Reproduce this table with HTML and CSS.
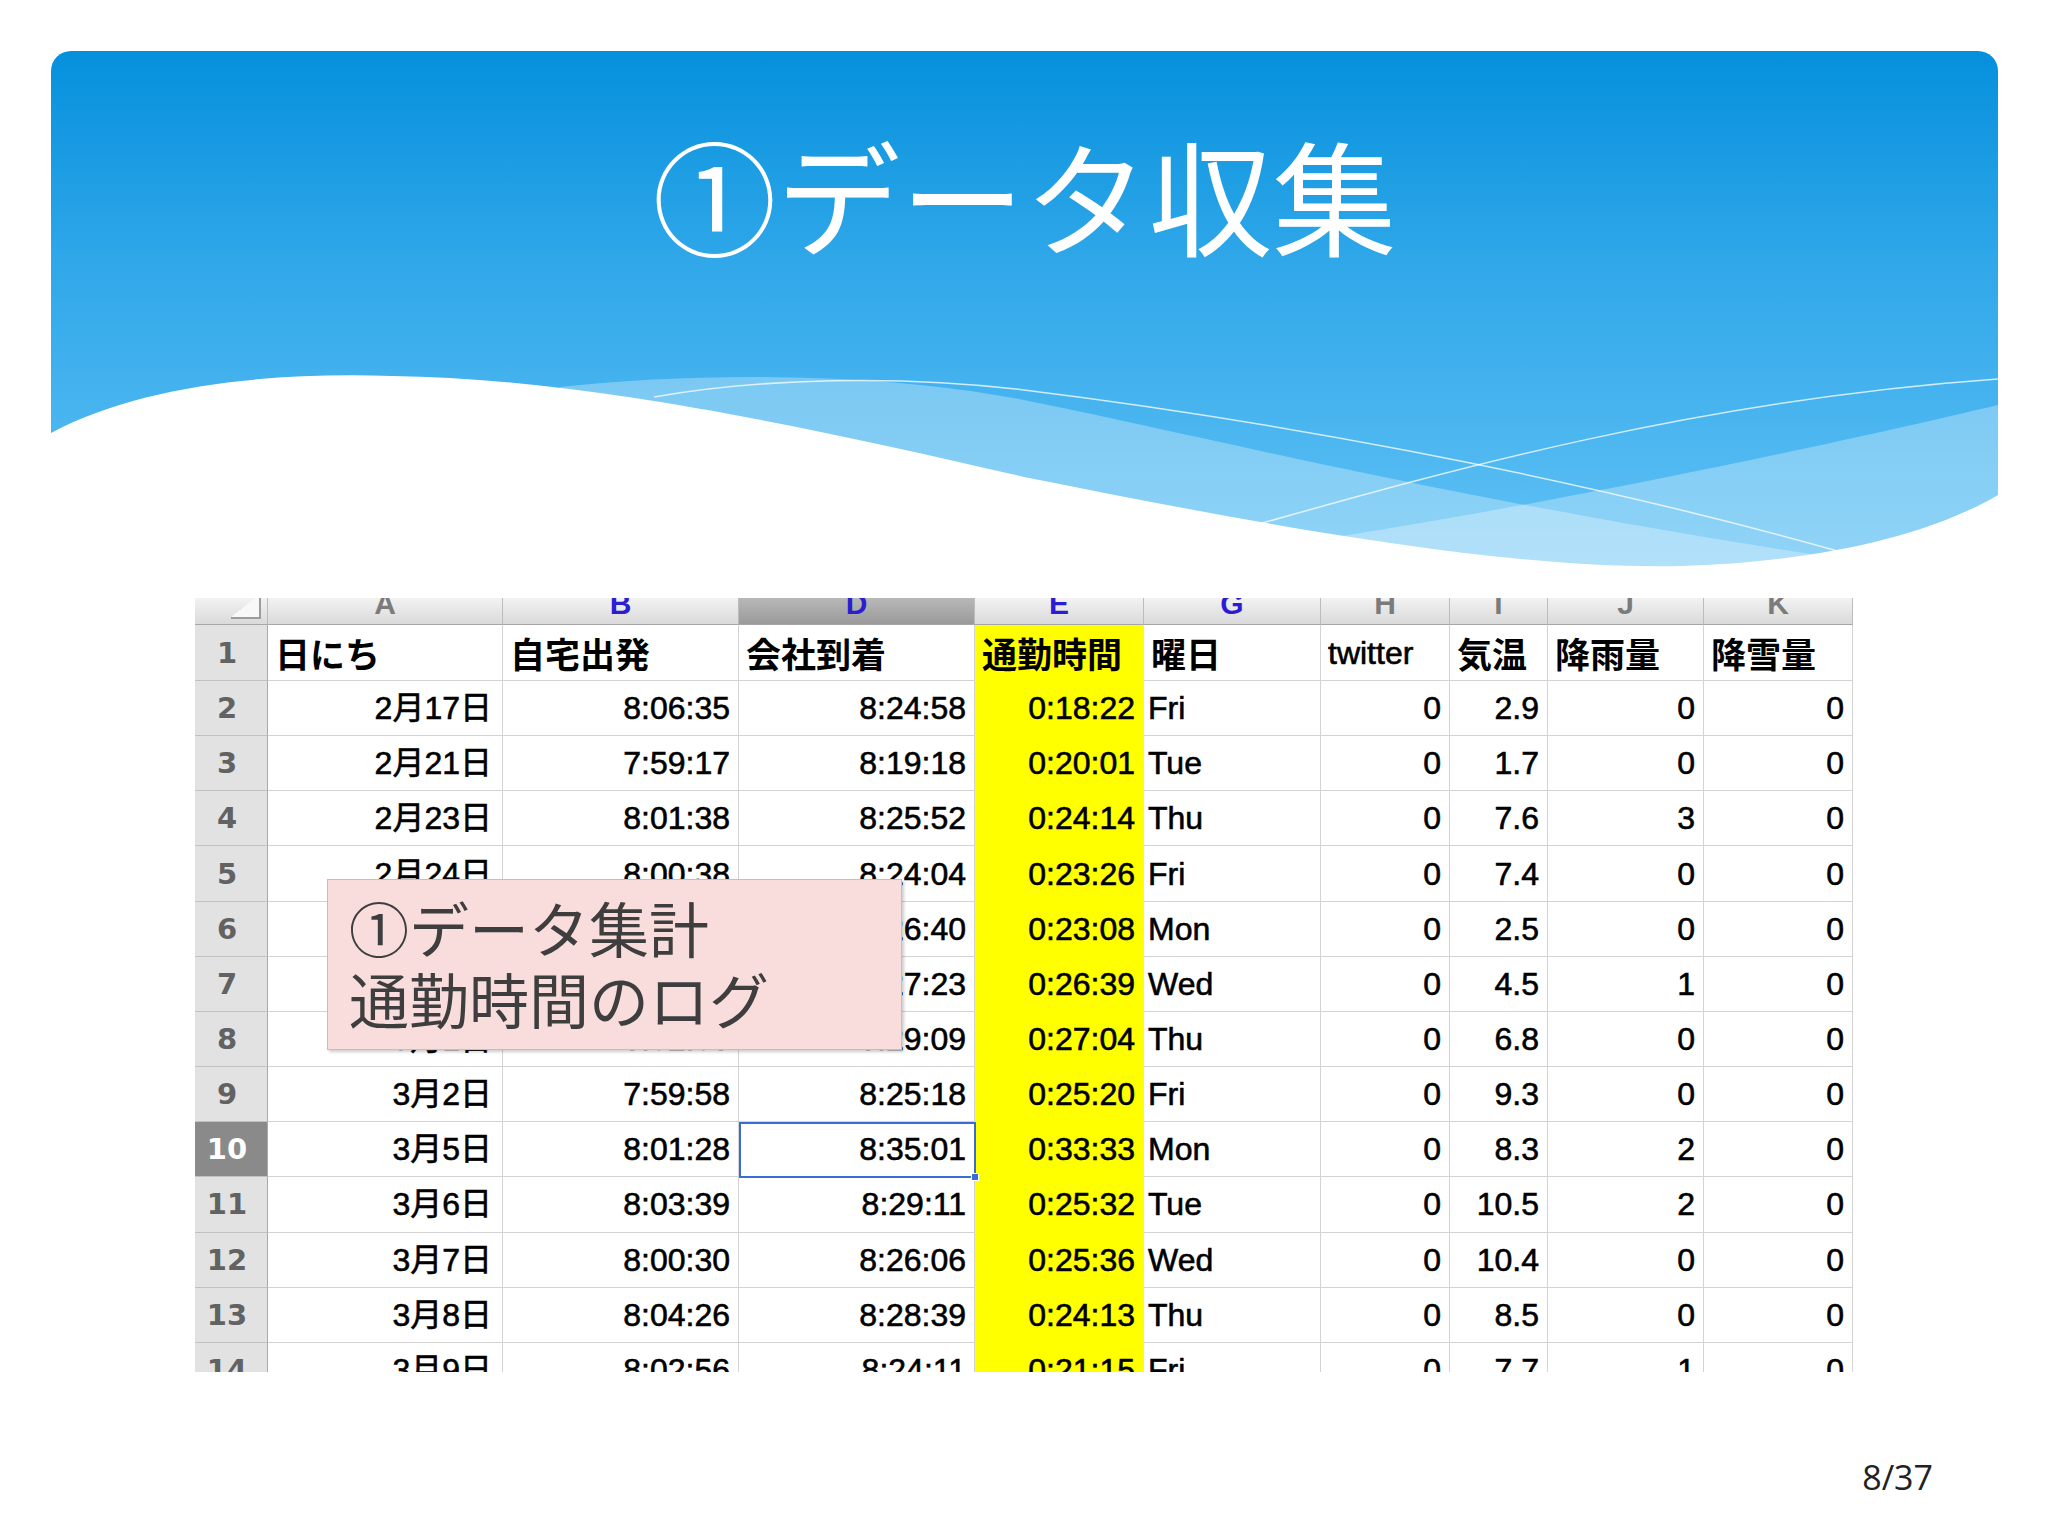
FILE: index.html
```html
<!DOCTYPE html>
<html lang="ja">
<head>
<meta charset="utf-8">
<title>①データ収集</title>
<link rel="stylesheet" href="styles.css">
</head>
<body>
<header class="banner">
  <h1 class="title">①データ収集</h1>
  <svg class="wave" viewBox="51 51 1947 520" preserveAspectRatio="none" aria-hidden="true">
    <path fill="#fff" fill-opacity="0.3" d="M560,387 C700,372 880,372 1024,400 C1200,435 1450,500 1850,560 L1850,600 L560,600 Z"/>
    <path fill="#fff" fill-opacity="0.3" d="M1998,405 C1850,440 1600,495 1330,538 L1330,600 L1998,600 Z"/>
    <path fill="none" stroke="#fff" stroke-opacity="0.75" stroke-width="1.5" d="M654,397 C760,378 900,375 1024,390 C1250,418 1550,470 1841,552"/>
    <path fill="none" stroke="#fff" stroke-opacity="0.75" stroke-width="1.5" d="M1259,524 C1450,470 1700,400 1998,379"/>
    <path fill="#fff" d="M51,433 C140,385 270,372 392,376 C560,378 760,415 1024,477 C1250,522 1500,570 1680,566 C1820,562 1930,535 1998,495 L1998,590 L51,590 Z"/>
  </svg>
</header>

<main class="sheet">
  <div class="ch corner"><span class="tri"></span></div>
  <div class="ch">A</div>
  <div class="ch blue">B</div>
  <div class="ch blue dark">D</div>
  <div class="ch blue">E</div>
  <div class="ch blue">G</div>
  <div class="ch">H</div>
  <div class="ch">I</div>
  <div class="ch">J</div>
  <div class="ch">K</div>

  <div class="rh">1</div>
  <div class="c l hd">日にち</div>
  <div class="c l hd">自宅出発</div>
  <div class="c l hd">会社到着</div>
  <div class="c l hd y">通勤時間</div>
  <div class="c l hd">曜日</div>
  <div class="c l">twitter</div>
  <div class="c l hd">気温</div>
  <div class="c l hd">降雨量</div>
  <div class="c l hd">降雪量</div>

  <div class="rh">2</div>
  <div class="c a">2月17日</div><div class="c">8:06:35</div><div class="c">8:24:58</div><div class="c y">0:18:22</div><div class="c l g">Fri</div><div class="c">0</div><div class="c">2.9</div><div class="c">0</div><div class="c">0</div>

  <div class="rh">3</div>
  <div class="c a">2月21日</div><div class="c">7:59:17</div><div class="c">8:19:18</div><div class="c y">0:20:01</div><div class="c l g">Tue</div><div class="c">0</div><div class="c">1.7</div><div class="c">0</div><div class="c">0</div>

  <div class="rh">4</div>
  <div class="c a">2月23日</div><div class="c">8:01:38</div><div class="c">8:25:52</div><div class="c y">0:24:14</div><div class="c l g">Thu</div><div class="c">0</div><div class="c">7.6</div><div class="c">3</div><div class="c">0</div>

  <div class="rh">5</div>
  <div class="c a">2月24日</div><div class="c">8:00:38</div><div class="c">8:24:04</div><div class="c y">0:23:26</div><div class="c l g">Fri</div><div class="c">0</div><div class="c">7.4</div><div class="c">0</div><div class="c">0</div>

  <div class="rh">6</div>
  <div class="c a">2月27日</div><div class="c">8:03:32</div><div class="c">8:26:40</div><div class="c y">0:23:08</div><div class="c l g">Mon</div><div class="c">0</div><div class="c">2.5</div><div class="c">0</div><div class="c">0</div>

  <div class="rh">7</div>
  <div class="c a">2月29日</div><div class="c">8:00:44</div><div class="c">8:27:23</div><div class="c y">0:26:39</div><div class="c l g">Wed</div><div class="c">0</div><div class="c">4.5</div><div class="c">1</div><div class="c">0</div>

  <div class="rh">8</div>
  <div class="c a">3月1日</div><div class="c">8:02:05</div><div class="c">8:29:09</div><div class="c y">0:27:04</div><div class="c l g">Thu</div><div class="c">0</div><div class="c">6.8</div><div class="c">0</div><div class="c">0</div>

  <div class="rh">9</div>
  <div class="c a">3月2日</div><div class="c">7:59:58</div><div class="c">8:25:18</div><div class="c y">0:25:20</div><div class="c l g">Fri</div><div class="c">0</div><div class="c">9.3</div><div class="c">0</div><div class="c">0</div>

  <div class="rh sel">10</div>
  <div class="c a">3月5日</div><div class="c">8:01:28</div><div class="c">8:35:01</div><div class="c y">0:33:33</div><div class="c l g">Mon</div><div class="c">0</div><div class="c">8.3</div><div class="c">2</div><div class="c">0</div>

  <div class="rh">11</div>
  <div class="c a">3月6日</div><div class="c">8:03:39</div><div class="c">8:29:11</div><div class="c y">0:25:32</div><div class="c l g">Tue</div><div class="c">0</div><div class="c">10.5</div><div class="c">2</div><div class="c">0</div>

  <div class="rh">12</div>
  <div class="c a">3月7日</div><div class="c">8:00:30</div><div class="c">8:26:06</div><div class="c y">0:25:36</div><div class="c l g">Wed</div><div class="c">0</div><div class="c">10.4</div><div class="c">0</div><div class="c">0</div>

  <div class="rh">13</div>
  <div class="c a">3月8日</div><div class="c">8:04:26</div><div class="c">8:28:39</div><div class="c y">0:24:13</div><div class="c l g">Thu</div><div class="c">0</div><div class="c">8.5</div><div class="c">0</div><div class="c">0</div>

  <div class="rh">14</div>
  <div class="c a">3月9日</div><div class="c">8:02:56</div><div class="c">8:24:11</div><div class="c y">0:21:15</div><div class="c l g">Fri</div><div class="c">0</div><div class="c">7.7</div><div class="c">1</div><div class="c">0</div>

  <div class="selbox"></div>
  <div class="note">①データ集計<br>通勤時間のログ</div>
</main>

<footer class="pagenum">8/37</footer>
</body>
</html>
```

FILE: styles.css
```css
html, body {
  margin: 0;
  padding: 0;
}

body {
  width: 2048px;
  height: 1536px;
  overflow: hidden;
  background: #ffffff;
  font-family: "Noto Sans CJK JP", sans-serif;
}

.banner {
  position: relative;
  margin: 51px 0 0 51px;
  width: 1947px;
  height: 520px;
  border-radius: 20px 20px 0 0;
  background: linear-gradient(#0590dc 0%, #2fa7e9 40%, #62c2f5 100%);
  overflow: hidden;
}

.title {
  position: relative;
  z-index: 1;
  margin: 0;
  padding-top: 80px;
  text-align: center;
  color: #ffffff;
  font-family: "Noto Sans CJK JP", sans-serif;
  font-weight: 400;
  font-size: 124px;
  line-height: 1;
}

.wave {
  position: absolute;
  left: 0;
  top: 0;
  width: 1947px;
  height: 520px;
}

.sheet {
  position: relative;
  margin: 27px 0 0 195px;
  width: 1658px;
  height: 774px;
  overflow: hidden;
  display: grid;
  grid-template-columns: 73px 235px 236px 236px 169px 177px 129px 98px 156px 149px;
  grid-template-rows: 27px 56px repeat(13, 55.17px);
  font-family: "Liberation Sans", "Noto Sans CJK JP", sans-serif;
  font-size: 32px;
  color: #000000;
  background: #ffffff;
}

.c {
  display: flex;
  align-items: center;
  justify-content: flex-end;
  padding: 0 8px;
  box-sizing: border-box;
  border-right: 1px solid #d3d3d3;
  border-bottom: 1px solid #d3d3d3;
  white-space: nowrap;
  overflow: hidden;
  line-height: 1;
  -webkit-text-stroke: 0.6px #000000;
}

.c.a {
  padding-right: 10px;
}

.c.l {
  justify-content: flex-start;
  padding-left: 7px;
}

.c.g {
  padding-left: 4px;
}

.c.hd {
  font-family: "Noto Sans CJK JP", sans-serif;
  font-weight: 700;
  font-size: 35px;
  -webkit-text-stroke: 0;
}

.c.y {
  background: #ffff00;
  border-bottom-color: transparent;
  border-right-color: transparent;
}

.rh {
  display: flex;
  align-items: center;
  justify-content: center;
  padding-right: 8px;
  box-sizing: border-box;
  background: #e2e2e2;
  border-right: 1px solid #a9a9a9;
  border-bottom: 1px solid #c2c2c2;
  font-family: "DejaVu Sans", sans-serif;
  font-weight: bold;
  font-size: 29px;
  color: #626262;
}

.rh.sel {
  background: #8a8a8a;
  color: #ffffff;
}

.ch {
  display: flex;
  align-items: flex-end;
  justify-content: center;
  padding-bottom: 5px;
  box-sizing: border-box;
  background: linear-gradient(#f2f2f2, #dadada);
  border-right: 1px solid #bcbcbc;
  border-bottom: 1px solid #a6a6a6;
  font-family: "Liberation Sans", sans-serif;
  font-weight: bold;
  font-size: 30px;
  line-height: 1;
  color: #7b7b7b;
}

.ch.blue {
  color: #2b1ed2;
}

.ch.dark {
  background: linear-gradient(#b8b8b8, #9a9a9a);
}

.ch.corner {
  justify-content: flex-end;
  padding: 0 6px 5px 0;
}

.tri {
  display: block;
  width: 30px;
  height: 24px;
  background: linear-gradient(to bottom right, transparent 50%, #f8f8f8 50%);
  border-right: 2px solid #9c9c9c;
  border-bottom: 2px solid #9c9c9c;
  box-sizing: border-box;
}

.selbox {
  position: absolute;
  left: 544px;
  top: 524px;
  width: 237px;
  height: 56px;
  border: 2px solid #3b6cd6;
  box-sizing: border-box;
}

.selbox::after {
  content: "";
  position: absolute;
  right: -5px;
  bottom: -5px;
  width: 6px;
  height: 6px;
  background: #3b6cd6;
  border: 1px solid #ffffff;
}

.note {
  position: absolute;
  left: 132px;
  top: 281px;
  width: 575px;
  height: 171px;
  box-sizing: border-box;
  padding: 11px 0 0 21px;
  background: #f9dddd;
  border: 1px solid #c9bcbc;
  box-shadow: 2px 2px 3px rgba(0, 0, 0, 0.2);
  font-family: "Noto Sans CJK JP", sans-serif;
  font-weight: 400;
  font-size: 60px;
  line-height: 71px;
  color: #3e3e3e;
  white-space: nowrap;
}

.pagenum {
  margin: 88px 115px 0 0;
  text-align: right;
  font-family: "Open Sans", "Noto Sans", sans-serif;
  font-size: 34px;
  line-height: 1;
  color: #222222;
}
```
